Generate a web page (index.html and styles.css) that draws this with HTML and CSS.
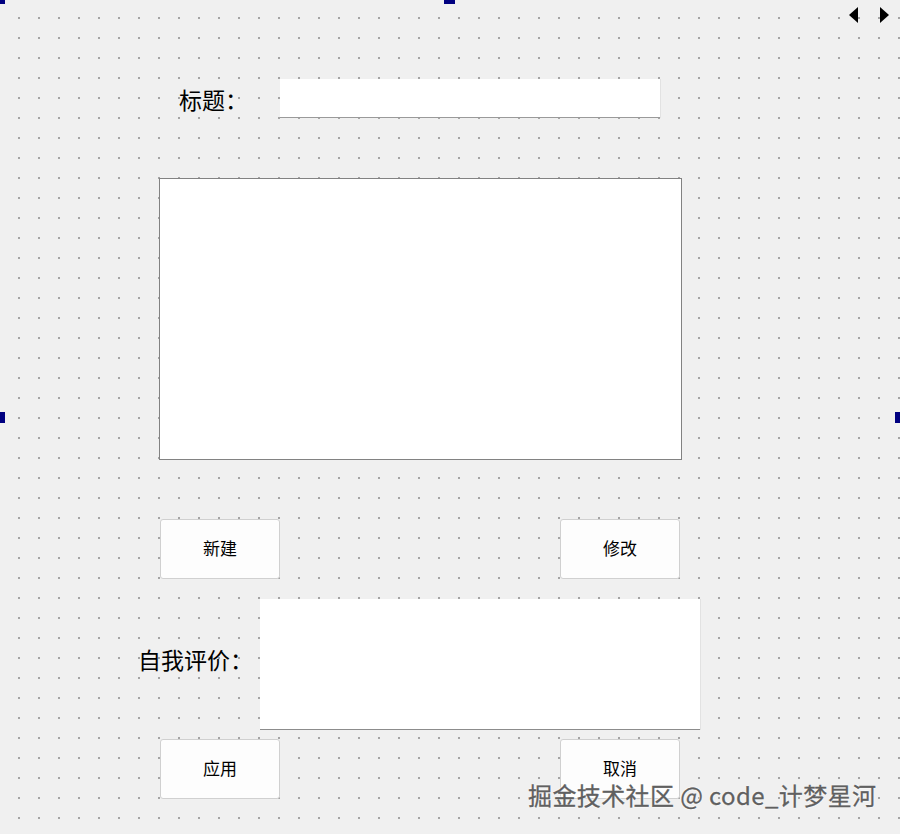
FILE: index.html
```html
<!DOCTYPE html>
<html lang="zh-CN">
<head>
    <meta charset="UTF-8">
    <meta name="viewport" content="width=device-width, initial-scale=1.0">
    <title>Form</title>
    <link rel="stylesheet" href="styles.css">
</head>
<body>

    <div class="canvas">
        <!-- Selection handles of the designer form -->
        <span class="handle handle-tl"></span>
        <span class="handle handle-top"></span>
        <span class="handle handle-left"></span>
        <span class="handle handle-right"></span>

        <!-- Page arrows -->
        <div class="arrows">
            <svg width="10" height="16" viewBox="0 0 10 16"><path d="M9 0 L0 8 L9 16 Z" fill="#000"/></svg>
            <svg width="10" height="16" viewBox="0 0 10 16"><path d="M1 0 L10 8 L1 16 Z" fill="#000"/></svg>
        </div>

        <!-- Title row -->
        <div class="row title-row">
            <label class="big-label title-label">标题：</label>
            <div class="line-edit"></div>
        </div>

        <!-- Main text box -->
        <div class="text-box"></div>

        <!-- First buttons -->
        <div class="row button-row first-buttons">
            <button class="push-button">新建</button>
            <button class="push-button">修改</button>
        </div>

        <!-- Self evaluation -->
        <div class="row eval-row">
            <label class="big-label eval-label">自我评价：</label>
            <div class="eval-box"></div>
        </div>

        <!-- Second buttons -->
        <div class="row button-row second-buttons">
            <button class="push-button">应用</button>
            <button class="push-button">取消</button>
        </div>

        <div class="watermark">掘金技术社区 @ code_计梦星河</div>
    </div>

</body>
</html>
```

FILE: styles.css
```css
* {
    box-sizing: border-box;
    margin: 0;
    padding: 0;
}

body {
    width: 900px;
    height: 834px;
    overflow: hidden;
    background-color: #f0f0f0;
    font-family: "Noto Sans CJK SC", "Noto Sans", sans-serif;
    color: #000;
}

.canvas {
    position: relative;
    width: 900px;
    height: 834px;
    padding-top: 79px;
    background-image: radial-gradient(circle at 1px 1px, #a4a4a4 0.9px, transparent 1.3px);
    background-size: 20px 20px;
    background-position: 18px 17px;
}

.handle {
    position: absolute;
    background-color: #000080;
}

.handle-tl {
    left: 0;
    top: 0;
    width: 5px;
    height: 4px;
}

.handle-top {
    left: 444px;
    top: 0;
    width: 11px;
    height: 4px;
}

.handle-left {
    left: 0;
    top: 412px;
    width: 5px;
    height: 11px;
}

.handle-right {
    right: 0;
    top: 412px;
    width: 5px;
    height: 11px;
}

.arrows {
    position: absolute;
    top: 7px;
    left: 849px;
    display: flex;
    gap: 20px;
}

.row {
    display: flex;
    align-items: center;
}

.big-label {
    font-size: 23px;
    line-height: 1;
}

.title-row {
    height: 39px;
    padding-left: 179px;
}

.title-label {
    width: 101px;
    padding-top: 1px;
}

.line-edit {
    width: 380px;
    height: 39px;
    background-color: #fff;
    border-bottom: 1px solid #9a9a9a;
    box-shadow: 1px 0 0 #e2e2e2;
}

.text-box {
    width: 523px;
    height: 282px;
    margin-top: 60px;
    margin-left: 159px;
    background-color: #fff;
    border: 1px solid #828282;
}

.button-row {
    justify-content: space-between;
    width: 520px;
    margin-left: 160px;
}

.first-buttons {
    margin-top: 59px;
}

.push-button {
    width: 120px;
    height: 60px;
    padding-bottom: 3px;
    font-family: "Noto Sans CJK SC", "Noto Sans", sans-serif;
    font-size: 17px;
    color: #000;
    background-color: #fdfdfd;
    border: 1px solid #d0d0d0;
    border-radius: 3px;
}

.eval-row {
    margin-top: 20px;
    padding-left: 138px;
    height: 131px;
}

.eval-label {
    width: 122px;
    padding-bottom: 10px;
}

.eval-box {
    width: 440px;
    height: 131px;
    background-color: #fff;
    border-bottom: 1px solid #8c8c8c;
    box-shadow: 1px 0 0 #e2e2e2;
}

.second-buttons {
    margin-top: 9px;
}

.watermark {
    position: absolute;
    left: 528px;
    top: 779px;
    font-size: 24px;
    line-height: 32px;
    letter-spacing: 0.4px;
    color: #606060;
    -webkit-text-stroke: 0.3px #606060;
    text-shadow: 0 0 2px #fff, 0 0 2px #fff, 0 0 1px #fff;
    white-space: nowrap;
}
```
